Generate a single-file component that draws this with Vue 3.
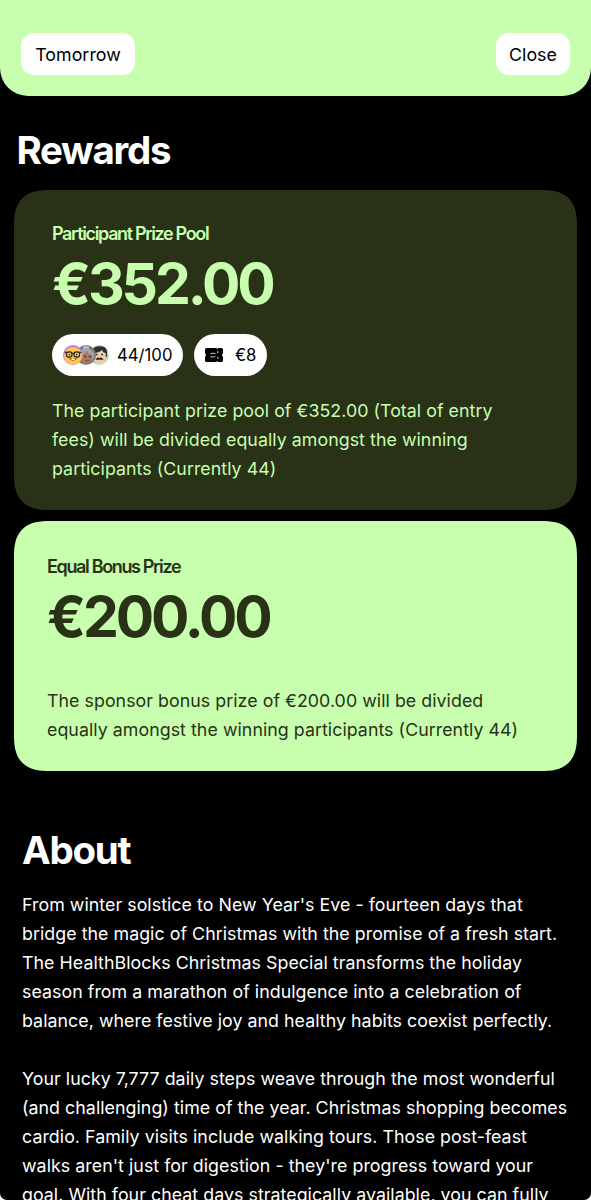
<template>
  <div class="page">
    <header class="topbar">
      <button class="topbar-btn">Tomorrow</button>
      <button class="topbar-btn close">Close</button>
    </header>

    <h2 class="rewards-title">Rewards</h2>

    <div class="cards">
      <section class="card card-dark">
        <h3>Participant Prize Pool</h3>
        <p class="amount">{{ money(pool) }}</p>
        <div class="pills">
          <div class="pill pill-people">
            <div class="avatars">
              <!-- nerd face -->
              <svg class="avatar front" viewBox="0 0 20 20">
                <circle cx="10" cy="10" r="10" fill="#c67be0" />
                <circle cx="10" cy="10.8" r="8.9" fill="#fbc94b" />
                <path d="M5.5 13.2q4.5 5.4 9 0z" fill="#a8602a" />
                <path d="M8.5 13.6h3v1.5h-3z" fill="#fff" />
                <g fill="#f0d878" stroke="#3c3018" stroke-width="1.3">
                  <rect x="3.5" y="7" width="5.4" height="5" rx="2" />
                  <rect x="11.1" y="7" width="5.4" height="5" rx="2" />
                  <path d="M1.8 7.5h2M8.9 8.5h2.2M16.2 7.5h2" fill="none" />
                </g>
                <circle cx="6.4" cy="9.6" r=".9" fill="#40301c" />
                <circle cx="13.6" cy="9.6" r=".9" fill="#40301c" />
              </svg>
              <!-- grey haired woman -->
              <svg class="avatar middle" viewBox="0 0 20 20">
                <circle cx="10" cy="10" r="10" fill="#75777c" />
                <circle cx="10" cy="3.8" r="3.2" fill="#b7b7b9" />
                <path d="M1.5 11Q2 3.5 10 3.5T18.5 11L16 16H4z" fill="#a2a3a6" />
                <path d="M4 11q4-1 7-5 2 4 5.5 5-.4 8-6.3 8T4 11z" fill="#a87a5e" />
                <path d="M8 11.5h2M13 11.5h2" stroke="#403630" stroke-width="1.4" />
                <path d="M9 15.5q2 1 4 0" fill="none" stroke="#774439" />
              </svg>
              <!-- man with moustache -->
              <svg class="avatar back" viewBox="0 0 20 20">
                <circle cx="10" cy="10" r="10" fill="#b9dfb2" />
                <path d="M2.8 11V6Q4 1.2 11 1.2T18 7v5z" fill="#302e2b" />
                <path d="M4 8q6 0 9-3 1 3 3.8 3v5q-1 6-6.4 6T4 13z" fill="#eccbb0" />
                <path d="M6.8 9.5h1.8M12.2 9.5H14" stroke="#332a25" stroke-width="1.3" />
                <path d="M6.5 14.2q2-2.4 4-1.2 2-1.2 4 1.2-2 1.4-4 .3-2 1.1-4-.3z" fill="#332a25" />
              </svg>
            </div>
            <span>{{ joined }}/100</span>
          </div>
          <div class="pill pill-fee">
            <svg class="ticket" viewBox="0 0 18 14">
              <path d="M1.6 0h9.8l.9.9.9-.9h3.2Q18 0 18 1.6v3.6q-.9.6-.9 1.8t.9 1.8v3.6q0 1.6-1.6 1.6h-3.2l-.9-.9-.9.9H1.6Q0 14 0 12.4V8.8q.9-.6.9-1.8T0 5.2V1.6Q0 0 1.6 0z" fill="#000" />
              <path d="M5.5 5.4h5M5.5 8.9h3.2M8.9 9.3l1.6-1.6" stroke="#fff" stroke-width=".8" />
              <path d="M12.9 3.2v2M12.9 8.8v2" stroke="#fff" stroke-width=".9" />
            </svg>
            <span>€8</span>
          </div>
        </div>
        <p class="text">
          The participant prize pool of {{ money(pool) }} (Total of entry<br />
          fees) will be divided equally amongst the winning<br />
          participants (Currently {{ joined }})
        </p>
      </section>

      <section class="card card-light">
        <h3>Equal Bonus Prize</h3>
        <p class="amount">{{ money(bonus) }}</p>
        <p class="text">
          The sponsor bonus prize of {{ money(bonus) }} will be divided<br />
          equally amongst the winning participants (Currently {{ joined }})
        </p>
      </section>
    </div>

    <section class="about">
      <h2>About</h2>
      <p v-for="(lines, i) in about" :key="i" class="text">
        <span v-for="line in lines" :key="line" class="line">{{ line }}</span>
      </p>
    </section>
  </div>
</template>

<script setup>
import { ref } from 'vue'

const joined = ref(44)
const pool = ref(352)
const bonus = ref(200)

const about = [
  [
    "From winter solstice to New Year's Eve - fourteen days that",
    'bridge the magic of Christmas with the promise of a fresh start.',
    'The HealthBlocks Christmas Special transforms the holiday',
    'season from a marathon of indulgence into a celebration of',
    'balance, where festive joy and healthy habits coexist perfectly.',
  ],
  [
    'Your lucky 7,777 daily steps weave through the most wonderful',
    '(and challenging) time of the year. Christmas shopping becomes',
    'cardio. Family visits include walking tours. Those post-feast',
    "walks aren't just for digestion - they're progress toward your",
    'goal. With four cheat days strategically available, you can fully',
  ],
]

function money(value) {
  return '€' + value.toFixed(2)
}
</script>

<style>
body {
  margin: 0;
  background: #fff;
}
</style>

<style scoped>
.page {
  height: 1200px;
  overflow: hidden;
  background: #000;
  border-radius: 0 0 7px 7px;
  font-family: 'Inter', 'Liberation Sans', sans-serif;
  color: #fff;
}
h2,
h3,
p {
  margin: 0;
}
.topbar {
  box-sizing: border-box;
  height: 96px;
  padding: 33px 21px 0;
  display: flex;
  justify-content: space-between;
  align-items: flex-start;
  background: #c7ffae;
  border-radius: 0 0 28px 28px;
}
.topbar-btn {
  width: 114px;
  height: 42px;
  padding: 0;
  border: none;
  border-radius: 13px;
  background: #fff;
  color: #000;
  font-family: inherit;
  font-size: 17.8px;
  font-weight: 400;
  letter-spacing: 0.05px;
}
.close {
  width: 74px;
}
h2 {
  font-weight: 700;
  font-size: 38.5px;
  line-height: 46px;
  letter-spacing: -1.3px;
}
.rewards-title {
  padding: 31px 16.5px 17px;
}
.cards {
  display: flex;
  flex-direction: column;
  gap: 11px;
  padding: 0 14px;
}
.card {
  box-sizing: border-box;
  border-radius: 31px;
}
@supports (corner-shape: superellipse(1.4)) {
  .card {
    border-radius: 36px;
    corner-shape: superellipse(1.4);
  }
}
.card-dark {
  height: 320px;
  padding: 33px 38px 0;
  background: #293216;
  color: #c7ffae;
}
.card-light {
  height: 250px;
  padding: 35px 33px 0;
  background: #c7ffae;
  color: #293216;
}
h3 {
  font-weight: 600;
  font-size: 18px;
  line-height: 22px;
  letter-spacing: -1.35px;
}
.amount {
  margin-top: 5px;
  font-weight: 700;
  font-size: 57px;
  line-height: 68px;
  letter-spacing: -3.1px;
}
.text {
  font-weight: 400;
  font-size: 17.8px;
  line-height: 29.05px;
  letter-spacing: 0.045px;
  white-space: nowrap;
}
.pills {
  display: flex;
  gap: 11px;
  margin-top: 16px;
}
.pill {
  box-sizing: border-box;
  height: 42px;
  display: flex;
  align-items: center;
  border-radius: 21px;
  background: #fff;
  color: #000;
  font-size: 16.7px;
}
.pill-people {
  width: 131px;
  padding-left: 11px;
  gap: 8px;
}
.pill-fee {
  width: 73px;
  padding-left: 11px;
  gap: 12px;
}
.avatars {
  display: flex;
}
.avatar {
  position: relative;
  width: 20px;
  height: 20px;
}
.front {
  z-index: 3;
}
.middle {
  z-index: 2;
  margin-left: -7px;
}
.back {
  z-index: 1;
  margin-left: -7px;
}
.ticket {
  width: 18px;
  height: 14px;
}
.card-dark .text {
  margin-top: 20px;
}
.card-light .text {
  margin-top: 35px;
}
.about {
  padding: 56px 22px 0;
}
.about h2 {
  margin-bottom: 17px;
}
.about .text + .text {
  margin-top: 29px;
}
.line {
  display: block;
}
</style>
